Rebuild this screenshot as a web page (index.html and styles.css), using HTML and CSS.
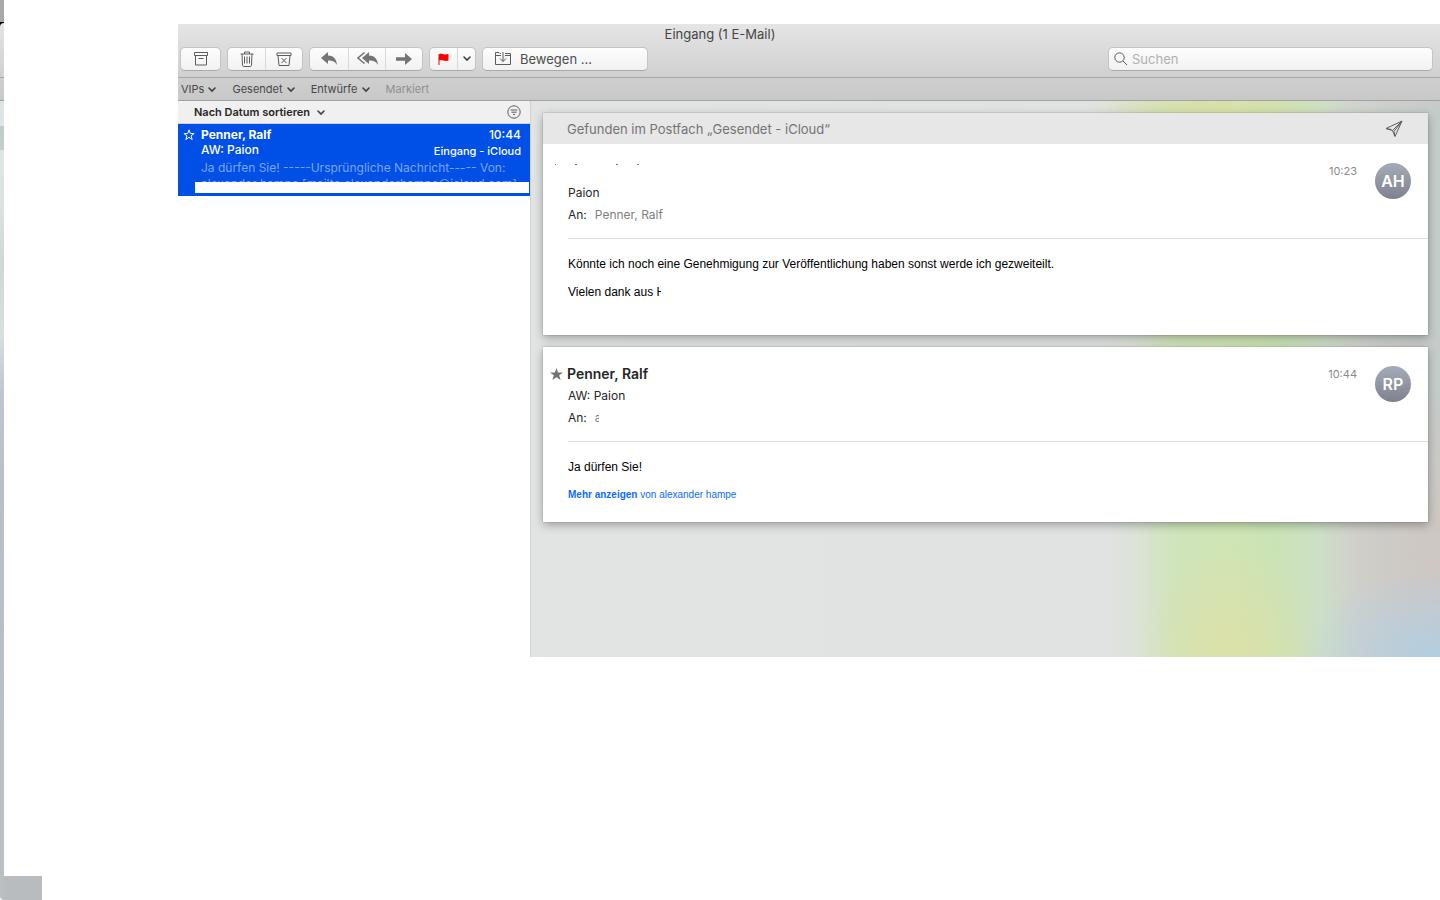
FILE: index.html
```html
<!DOCTYPE html>
<html lang="de">
<head>
    <meta charset="UTF-8">
    <meta name="viewport" content="width=device-width, initial-scale=1.0">
    <title>Eingang (1 E-Mail)</title>
    <link rel="stylesheet" href="styles.css">
</head>
<body>
    <div class="desktop">
        <div class="side">
            <div class="edge"></div>
            <div class="edge-foot"></div>
        </div>

        <div class="window">
            <header class="titlebar">
                <h1>Eingang (1 E-Mail)</h1>
                <div class="toolbar">
                    <div class="group">
                        <button class="w-archive" aria-label="Archivieren">
                            <svg width="16" height="16" viewBox="0 0 16 16" class="line"><path d="M1.5 1.5h13v3h-13zM2.5 4.5v9.500h11V4.5M5.5 7.5h5"/></svg>
                        </button>
                    </div>
                    <div class="group">
                        <button class="w-mid" aria-label="Löschen">
                            <svg width="14" height="16" viewBox="0 0 14 16" class="line"><path d="M.5 3h13M4.5 3V1h5v2M2 3l.5 11c0 1 .5 1.500 1.500 1.500h6c1 0 1.500-.5 1.500-1.500L12 3M4.500 5.500v7M7 5.500v7M9.500 5.500v7"/></svg>
                        </button>
                        <button class="w-mid" aria-label="Werbung">
                            <svg width="16" height="16" viewBox="0 0 16 16" class="line"><path d="M1 2h14v2.500H1zM2 4.500l1 10h10l1-10M5.500 7l5 5M10.500 7l-5 5"/></svg>
                        </button>
                    </div>
                    <div class="group">
                        <button class="w-reply" aria-label="Antworten">
                            <svg width="16" height="14" viewBox="0 0 16 14" class="solid"><path d="M0 6L7 0v3.500c5 0 8.500 3 9 9.500-2-3.500-4.500-4.500-9-4.500V12z"/></svg>
                        </button>
                        <button class="w-mid" aria-label="Allen antworten">
                            <svg width="21" height="14" viewBox="0 0 21 14" class="solid"><path d="M5 6l7-6v3.500c5 0 8.500 3 9 9.500-2-3.500-4.500-4.500-9-4.500V12z"/><path d="M7.500.5L1 6l6.500 5.500" class="outline"/></svg>
                        </button>
                        <button class="w-mid" aria-label="Weiterleiten">
                            <svg width="16" height="12" viewBox="0 0 16 12" class="solid"><path d="M0 4.300h9V0l7 6-7 6V7.700H0z"/></svg>
                        </button>
                    </div>
                    <div class="group">
                        <button class="w-flag" aria-label="Markieren">
                            <svg width="11" height="13" viewBox="0 0 11 13"><path d="M.5 1.500C3-.5 4.500 2.500 10.500 1v6.500C6 9 4.500 6 1.500 7.500V12h-1z" fill="#ff0000"/></svg>
                        </button>
                        <button class="w-caret" aria-label="Markierungsfarbe">
                            <svg width="8" height="6" viewBox="0 0 8 6" class="caret"><path d="M1 1l3 3 3-3"/></svg>
                        </button>
                    </div>
                    <div class="group">
                        <button class="move">
                            <svg width="16" height="14" viewBox="0 0 16 14" class="line"><path d="M6 1.500H5L4 .5H.5v12h15v-11H10M.5 3.500H6M10 3.500h5.500M8 0v9.500M5 6.500l3 3 3-3"/></svg>
                            Bewegen ...
                        </button>
                    </div>
                    <label class="search">
                        <svg width="14" height="14" viewBox="0 0 14 14" class="line"><circle cx="5.500" cy="5.500" r="4.700"/><path d="M9 9l4 4"/></svg>
                        <input type="text" placeholder="Suchen" aria-label="Suchen">
                    </label>
                </div>
            </header>

            <nav class="favorites">
                <a href="#">VIPs <svg width="8" height="6" viewBox="0 0 8 6" class="caret"><path d="M1 1l3 3 3-3"/></svg></a>
                <a href="#">Gesendet <svg width="8" height="6" viewBox="0 0 8 6" class="caret"><path d="M1 1l3 3 3-3"/></svg></a>
                <a href="#">Entwürfe <svg width="8" height="6" viewBox="0 0 8 6" class="caret"><path d="M1 1l3 3 3-3"/></svg></a>
                <a href="#" class="off">Markiert</a>
            </nav>

            <div class="panes">
                <section class="list">
                    <div class="sortbar">
                        <button class="sort">Nach Datum sortieren <svg width="8" height="6" viewBox="0 0 8 6" class="caret"><path d="M1 1l3 3 3-3"/></svg></button>
                        <button class="filter" aria-label="Filter">
                            <svg width="14" height="14" viewBox="0 0 14 14" class="line"><circle cx="7" cy="7" r="6.200"/><path d="M3.500 5h7M4.500 7.200h5M6 9.400h2"/></svg>
                        </button>
                    </div>
                    <article class="item">
                        <svg width="12" height="12" viewBox="0 0 12 12" class="star-line"><path d="M6 .9l1.300 3.600h3.800L8 6.800l1.200 3.800L6 8.300l-3.200 2.300L4 6.800.9 4.500h3.800z"/></svg>
                        <div class="item-body">
                            <div class="item-row name"><b>Penner, Ralf</b><span>10:44</span></div>
                            <div class="item-row subject"><span>AW: Paion</span><span class="box">Eingang - iCloud</span></div>
                            <p class="preview">Ja dürfen Sie! -----Ursprüngliche Nachricht----- Von:<br>alexander hampe [mailto:alexanderhampe@icloud.com]</p>
                        </div>
                        <div class="blank"></div>
                    </article>
                </section>

                <main class="reader">
                    <article class="mail">
                        <div class="found">
                            <span>Gefunden im Postfach „Gesendet - iCloud“</span>
                            <svg width="18" height="18" viewBox="0 0 18 18" class="line"><path d="M1 8.500L17 1l-7 15.500-2.500-6zM17 1L7.500 10.500M17 1l-8 10.500.8 4.500M1 8.500l5.500 1"/></svg>
                        </div>
                        <div class="mail-head">
                            <div class="from">
                                <svg width="90" height="4" viewBox="0 0 90 4" class="marks"><path d="M1 2.500h1M21 2.500h2M62 2.500h2M83 2.500h2"/></svg>
                            </div>
                            <div class="line-text">Paion</div>
                            <div class="line-text">An: <span class="to">Penner, Ralf</span></div>
                            <time>10:23</time>
                            <div class="avatar">AH</div>
                        </div>
                        <div class="mail-text tall">
                            <p>Könnte ich noch eine Genehmigung zur Veröffentlichung haben sonst werde ich gezweiteilt.</p>
                            <p>Vielen dank aus <span class="cut">H</span></p>
                        </div>
                    </article>

                    <article class="mail">
                        <div class="mail-head">
                            <div class="from">
                                <svg width="13" height="12" viewBox="0 0 13 12" class="solid"><path d="M6.500 0l1.600 4.500H13L9.200 7.300l1.400 4.700-4.100-2.800L2.400 12l1.400-4.700L0 4.500h4.900z"/></svg>
                                <b>Penner, Ralf</b>
                            </div>
                            <div class="line-text">AW: Paion</div>
                            <div class="line-text">An: <span class="to cut">a</span></div>
                            <time>10:44</time>
                            <div class="avatar">RP</div>
                        </div>
                        <div class="mail-text">
                            <p>Ja dürfen Sie!</p>
                            <a href="#" class="more"><b>Mehr anzeigen</b> von alexander hampe</a>
                        </div>
                    </article>
                </main>
            </div>
        </div>
    </div>
</body>
</html>
```
FILE: styles.css
```css
* {
    box-sizing: border-box;
}
body {
    margin: 0;
    background: #fff;
    color: #262626;
    font-family: Inter, "Liberation Sans", sans-serif;
    font-size: 12px;
}
h1, p {
    margin: 0;
    font-weight: normal;
}
button {
    border: 0;
    padding: 0;
    background: none;
    font: inherit;
    color: inherit;
}
a {
    color: inherit;
    text-decoration: none;
}
svg {
    flex: none;
}
.line {
    fill: none;
    stroke: #5c5c5c;
    stroke-width: 1;
}
.solid {
    fill: #747474;
}
.outline {
    fill: none;
    stroke: #747474;
    stroke-width: 1.5;
}
.caret {
    fill: none;
    stroke: #404040;
    stroke-width: 1.6;
    stroke-linecap: round;
}
.desktop {
    display: grid;
    grid-template-columns: 178px 1fr;
    min-height: 100vh;
}

/* sliver of the window behind */
.side {
    display: flex;
    align-items: flex-end;
    background: linear-gradient(#a9a9a9, #a9a9a9) 0 0 / 4px 22px no-repeat,
        linear-gradient(#000, #000) 0 0 / 4px 30px no-repeat;
}
.edge {
    width: 4px;
    align-self: stretch;
    margin-top: 23px;
    border-radius: 4px 0 0 4px;
    background: linear-gradient(#e4e4e4 0, #d0d0d0 54px, #a5a5a5 54px, #a5a5a5 55px, #cfcfcf 55px, #c9c9c9 77px, #a0a0a0 77px, #a0a0a0 78px, #dfe5e6 78px, #dfe5e6 103px, #bfcbca 103px, #c3cecd 127px, #dde5e6 127px, #dce3e2 180px, #d0d8d5 240px, #d8dfdf 310px, #bdc6cf 370px, #b8c0c5 480px, #babfc2 100%);
}
.edge-foot {
    width: 38px;
    height: 24px;
    background: #b9bcbe;
}

.window {
    align-self: start;
    margin-top: 24px;
}
.titlebar {
    background: linear-gradient(#e5e5e5, #d0d0d0);
    border-bottom: 1px solid #a9a9a9;
}
.titlebar h1 {
    padding: 1px 178px 0 0;
    height: 23px;
    font-size: 13px;
    line-height: 18px;
    text-align: center;
    color: #454545;
}
.toolbar {
    display: flex;
    gap: 6px;
    padding: 0 7px 6px 2px;
}
.group {
    display: flex;
    height: 24px;
    border: 1px solid #c4c4c4;
    border-bottom-color: #a9a9a9;
    border-radius: 5px;
    background: linear-gradient(#fdfdfd, #f2f2f2);
}
.group button {
    display: flex;
    align-items: center;
    justify-content: center;
}
.group button + button {
    border-left: 1px solid #d9d9d9;
}
.w-archive {
    width: 39px;
}
.w-mid {
    width: 37px;
}
.w-reply {
    width: 38px;
}
.w-flag {
    width: 27px;
}
.w-caret {
    width: 18px;
}
.group .move {
    width: 164px;
    justify-content: flex-start;
    gap: 9px;
    padding-left: 12px;
    font-size: 13px;
    color: #4d4d4d;
}
.search {
    display: flex;
    align-items: center;
    gap: 4px;
    width: 325px;
    height: 24px;
    margin-left: auto;
    padding-left: 5px;
    border: 1px solid #c4c4c4;
    border-bottom-color: #a9a9a9;
    border-radius: 5px;
    background: linear-gradient(#fdfdfd, #f2f2f2);
}
.search input {
    flex: 1;
    min-width: 0;
    border: 0;
    padding: 0;
    background: none;
    font: inherit;
    font-size: 13px;
    outline: none;
}
.search input::placeholder {
    color: #b0b0b0;
}

.favorites {
    display: flex;
    gap: 16px;
    height: 23px;
    padding-left: 3px;
    line-height: 22px;
    font-size: 11px;
    color: #484848;
    background: linear-gradient(#cfcfcf, #c8c8c8);
    border-bottom: 1px solid #a2a2a2;
}
.favorites svg {
    margin-left: 1px;
}
.favorites .off {
    color: #8f8f8f;
}

.panes {
    display: grid;
    grid-template-columns: 353px 1fr;
}
.list {
    border-right: 1px solid #d2d2d2;
}
.sortbar {
    display: flex;
    justify-content: space-between;
    align-items: center;
    height: 23px;
    padding: 0 9px 0 16px;
    background: #f0f0f0;
    border-bottom: 1px solid #d0d0d0;
}
.sort {
    font-size: 11px;
    font-weight: 600;
}
.sort svg {
    margin-left: 4px;
}
.filter {
    display: flex;
}
.item {
    position: relative;
    height: 72px;
    padding: 3px 9px 0 23px;
    overflow: hidden;
    background: #0050e8;
    color: #fff;
}
.star-line {
    position: absolute;
    left: 5px;
    top: 5px;
    fill: none;
    stroke: #fff;
}
.item-row {
    display: flex;
    justify-content: space-between;
    line-height: 16px;
}
.item-row.subject {
    line-height: 14px;
    font-weight: 500;
}
.item-row.name span {
    font-weight: 500;
}
.item-row .box {
    font-size: 11px;
    line-height: 17px;
}
.preview {
    line-height: 16px;
    white-space: nowrap;
    color: #7ba4f3;
}
.blank {
    position: absolute;
    left: 17px;
    right: 1px;
    bottom: 3px;
    height: 11px;
    background: #fff;
}
/* rest of the preview stays hidden under the bar */
.blank::after {
    content: "";
    position: absolute;
    left: 0;
    right: 0;
    top: 100%;
    height: 3px;
    background: #0050e8;
}

.reader {
    display: flex;
    flex-direction: column;
    gap: 12px;
    padding: 12px 12px 135px;
    background:
        radial-gradient(ellipse 140px 90px at 100% 100%, #b3cee1 0%, rgba(179, 206, 225, 0) 100%),
        radial-gradient(ellipse 90px 120px at 77% 100%, rgba(221, 224, 168, .9) 10%, rgba(221, 224, 168, 0) 100%),
        radial-gradient(ellipse 130px 80px at 75% 0, #d9e0a8 0%, rgba(217, 224, 168, 0) 100%),
        radial-gradient(ellipse 120px 170px at 100% 82%, rgba(208, 198, 193, .9), rgba(208, 198, 193, 0)),
        linear-gradient(90deg, #e1e4e3 0, #e1e3e3 63%, #dae3d4 67%, #cfe4bb 71%, #cfe5b4 77%, #cae3b6 82%, #cddfc8 87%, #d0d3ce 91%, #c5cbc9 100%);
}
.mail {
    background: #fff;
    box-shadow: 0 0 1px rgba(0, 0, 0, .4), 0 3px 9px rgba(0, 0, 0, .3);
}
.found {
    display: flex;
    align-items: center;
    justify-content: space-between;
    height: 31px;
    padding: 0 25px 0 24px;
    background: #e7e7e7;
    font-size: 13px;
    color: #747474;
}
.mail-head {
    position: relative;
    margin-left: 25px;
    padding-top: 15px;
    height: 95px;
    border-bottom: 1px solid #e0e0e0;
}
.from {
    display: flex;
    align-items: center;
    gap: 4px;
    height: 23px;
    margin-left: -18px;
    font-size: 14px;
}
.from b {
    font-weight: 600;
}
.marks {
    align-self: flex-start;
    margin-left: 4px;
    margin-top: 3px;
    stroke: #777;
}
.line-text {
    display: flex;
    gap: 8px;
    line-height: 22px;
}
.to {
    color: #808080;
}
.cut {
    display: inline-block;
    width: 4px;
    overflow: hidden;
    vertical-align: bottom;
}
.mail-head time {
    position: absolute;
    top: 19px;
    right: 71px;
    font-size: 11px;
    line-height: 16px;
    color: #8a8a8a;
}
.avatar {
    position: absolute;
    top: 19px;
    right: 17px;
    width: 36px;
    height: 36px;
    border-radius: 50%;
    background: linear-gradient(#a5abb9, #7f828d);
    color: #fff;
    font-size: 16px;
    font-weight: 600;
    line-height: 36px;
    text-align: center;
}
.mail-text {
    padding: 18px 25px 20px;
    font-family: "Liberation Sans", sans-serif;
    line-height: 14px;
    color: #000;
}
.mail-text.tall {
    padding-bottom: 36px;
}
.mail-text p + p {
    margin-top: 14px;
}
.more {
    display: block;
    margin-top: 14px;
    font-size: 10px;
    color: #0a6cff;
}
```
